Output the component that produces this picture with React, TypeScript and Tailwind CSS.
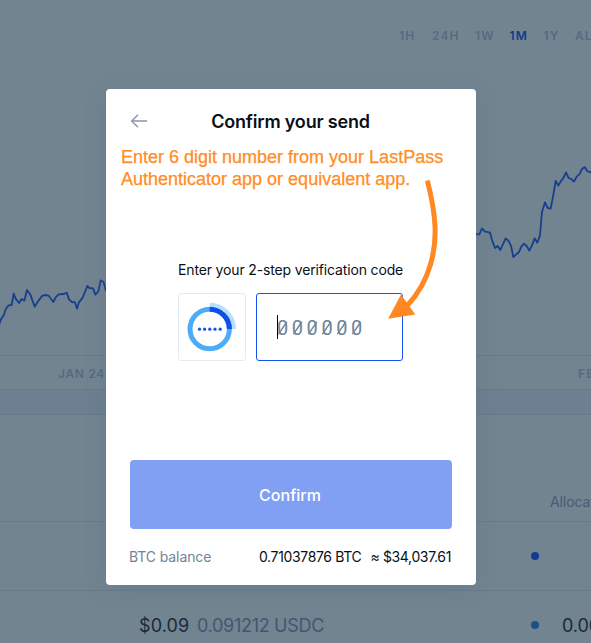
import React from "react";

const ranges = [
  { label: "1H", style: "w-[33px]" },
  { label: "24H", style: "w-[43px]" },
  { label: "1W", style: "w-[34.5px]" },
  { label: "1M", style: "w-[34px] text-[#103a8e]" },
  { label: "1Y", style: "w-[31.5px]" },
  { label: "ALL", style: "" },
];

function PriceChart() {
  return (
    <svg className="block shrink-0" width="591" height="290" viewBox="0 65 591 290" fill="none" stroke="#163f8e" strokeWidth="1.8" strokeLinejoin="round">
      <g transform="translate(0 270) scale(.33333)">
        <polyline
          vectorEffect="non-scaling-stroke"
          points="-3,166 0,156 3,148 12,134 17,118 26,106 35,105 41,71 47,86 57,99 65,87 73,92 81,60 92,76 104,110 114,94 127,77 137,75 146,77 160,96 167,82 176,73 192,72 200,68 207,88 216,96 225,97 231,116 237,97 248,83 262,48 268,54 279,55 286,74 295,64 302,31 311,36 318,63"
        />
      </g>
      <g transform="translate(470 150) scale(.33333)">
        <polyline
          vectorEffect="non-scaling-stroke"
          points="18,252 28,253 36,235 44,244 60,248 66,270 75,294 83,288 91,300 107,265 115,272 123,287 130,321 138,314 147,306 154,290 162,281 170,288 178,302 186,286 194,265 202,278 210,256 216,185 225,157 233,174 242,176 250,135 257,93 265,107 273,93 280,84 288,67 296,84 304,87 312,95 320,80 328,73 336,57 344,51 351,63 365,68"
        />
      </g>
    </svg>
  );
}

function Dashboard() {
  return (
    <div className="flex h-full w-full flex-col bg-[#728490] text-[#556b80]">
      <div className="flex h-[65px] shrink-0 items-start whitespace-nowrap pl-[399px] pt-[28px] text-[12px] font-semibold leading-4 tracking-[1.1px]">
        {ranges.map((r) => (
          <span key={r.label} className={`shrink-0 ${r.style}`}>{r.label}</span>
        ))}
      </div>
      <PriceChart />
      <div className="flex h-[34px] shrink-0 items-center justify-between whitespace-nowrap border-t border-[#687a8a] pl-[58px] pt-[2px] text-[12px] font-semibold tracking-[1.1px]">
        <span className="tracking-[0.7px]">JAN 24</span>
        <span className="w-[13px]">FEB</span>
      </div>
      <div className="h-[25px] shrink-0 border-t border-[#687a8b] bg-[#6d7f90]" />
      <div className="flex h-[107px] shrink-0 items-end border-t border-[#687a8a] pb-[9px] pl-[550px] text-[14px] leading-5 tracking-[-0.1px] text-[#465d73]">
        Allocation
      </div>
      <div className="flex h-[69px] shrink-0 items-center border-t border-[#687a8a] pl-[531px]">
        <span className="size-2 shrink-0 rounded-full bg-[#123c91]" />
      </div>
      <div className="flex h-[69px] shrink-0 items-center whitespace-nowrap border-t border-[#687a8a] pl-[139px] text-[18px] leading-6">
        <span className="w-[58px] shrink-0 pt-[2px] tracking-[0.1px] text-[#182a3b]">$0.09</span>
        <span className="w-[334px] shrink-0 pt-[2px] tracking-[-0.3px] text-[#3f5870]">0.091212 USDC</span>
        <span className="size-2 shrink-0 rounded-full bg-[#1b4f87]" />
        <span className="ml-[23px] shrink-0 pt-[2px] tracking-[-0.1px] text-[#182a3b]">0.00%</span>
      </div>
    </div>
  );
}

function AuthenticatorIcon() {
  return (
    <svg width="66" height="66" viewBox="179 294 66 66" fill="none">
      <circle cx="209.7" cy="329" r="19.7" stroke="#4dacf8" strokeWidth="5" />
      <path d="M209.7 304.8A24.2 24.2 0 0 1 233.9 329" stroke="#b7e1fb" strokeWidth="4.2" />
      <path d="M209.7 309.3A19.7 19.7 0 0 1 229.4 329" stroke="#0f50e8" strokeWidth="5" />
      <g fill="#1652f0">
        <circle cx="199.5" cy="329.2" r="1.6" />
        <circle cx="204.6" cy="329.2" r="1.6" />
        <circle cx="209.8" cy="329.2" r="1.6" />
        <circle cx="215" cy="329.2" r="1.6" />
        <circle cx="220.2" cy="329.2" r="1.6" />
      </g>
    </svg>
  );
}

function SlashedZero() {
  return (
    <span className="relative flex h-6 w-[14.8px] shrink-0 items-center pt-[2px] font-['Roboto',sans-serif] text-[20px] text-[#708599]">
      <span className="-ml-[1px]">0</span>
      <svg className="absolute left-0 top-[5px]" width="11" height="16" fill="none" stroke="#708599" strokeWidth="1.4">
        <path d="M0.4 14.2 8.8 2" />
      </svg>
    </span>
  );
}

export default function App() {
  return (
    <main className="relative h-[643px] w-[591px] overflow-hidden font-['Inter',sans-serif]">
      <Dashboard />
      <section className="absolute left-[106px] top-[89px] flex h-[496px] w-[370px] flex-col rounded-[4px] bg-white px-6 text-[#0a0f17] shadow-[0_4px_20px_rgba(85,105,135,0.3)]">
        <header className="relative flex h-[56px] shrink-0 items-end justify-center pb-[11px] pr-px">
          <svg className="absolute left-0 top-[24px]" width="19" height="16" fill="none" stroke="#8696ac" strokeWidth="1.4">
            <path d="M17 8H2M8 1.7 1.7 8 8 14.3" />
          </svg>
          <h1 className="whitespace-nowrap text-[18px] font-semibold leading-6 tracking-[-0.18px]">Confirm your send</h1>
        </header>
        <p className="-ml-[9px] h-[114px] shrink-0 whitespace-nowrap pt-px font-['Liberation_Sans',sans-serif] text-[18px] leading-[22px] tracking-[0px] text-[#ff8c24] [-webkit-text-stroke:0.25px_#ff8c24]">
          Enter 6 digit number from your LastPass
          <br />
          Authenticator app or equivalent app.
        </p>
        <div className="ml-[48px] flex w-[225px] shrink-0 flex-col">
          <label className="h-[34px] whitespace-nowrap text-[14px] leading-[22px] tracking-[-0.15px]">Enter your 2-step verification code</label>
          <div className="flex gap-[10px]">
            <div className="h-[68px] w-[68px] shrink-0 rounded-[3px] border border-[#e6e9ed]">
              <AuthenticatorIcon />
            </div>
            <div className="flex h-[68px] w-[147px] shrink-0 items-center rounded-[3px] border border-[#1652f0] pl-5">
              <span className="h-[24px] w-px shrink-0 bg-black" />
              {[0, 1, 2, 3, 4, 5].map((n) => <SlashedZero key={n} />)}
            </div>
          </div>
        </div>
        <button className="mt-[99px] h-[69px] w-[322px] shrink-0 rounded-[4px] bg-[#819ff3] pr-[2px] text-[16px] font-medium text-white">Confirm</button>
        <footer className="mt-[18px] flex shrink-0 justify-between whitespace-nowrap pr-px text-[14px] leading-5">
          <span className="-ml-px tracking-[-0.1px] text-[#708599]">BTC balance</span>
          <span className="flex gap-[9px] tracking-[-0.35px]"><span>0.71037876 BTC</span><span>≈ $34,037.61</span></span>
        </footer>
        <svg className="pointer-events-none absolute left-[264px] top-[81px]" width="80" height="160" viewBox="370 170 80 160">
          <path d="M427.4 180.5C436 215 438 239 430.6 264C426.2 280 418 294 407 306" fill="none" stroke="#ff8822" strokeWidth="5" />
          <path d="M388.2 318.7 401 294.5 415.3 314.5Z" fill="#ff8822" />
        </svg>
      </section>
    </main>
  );
}
